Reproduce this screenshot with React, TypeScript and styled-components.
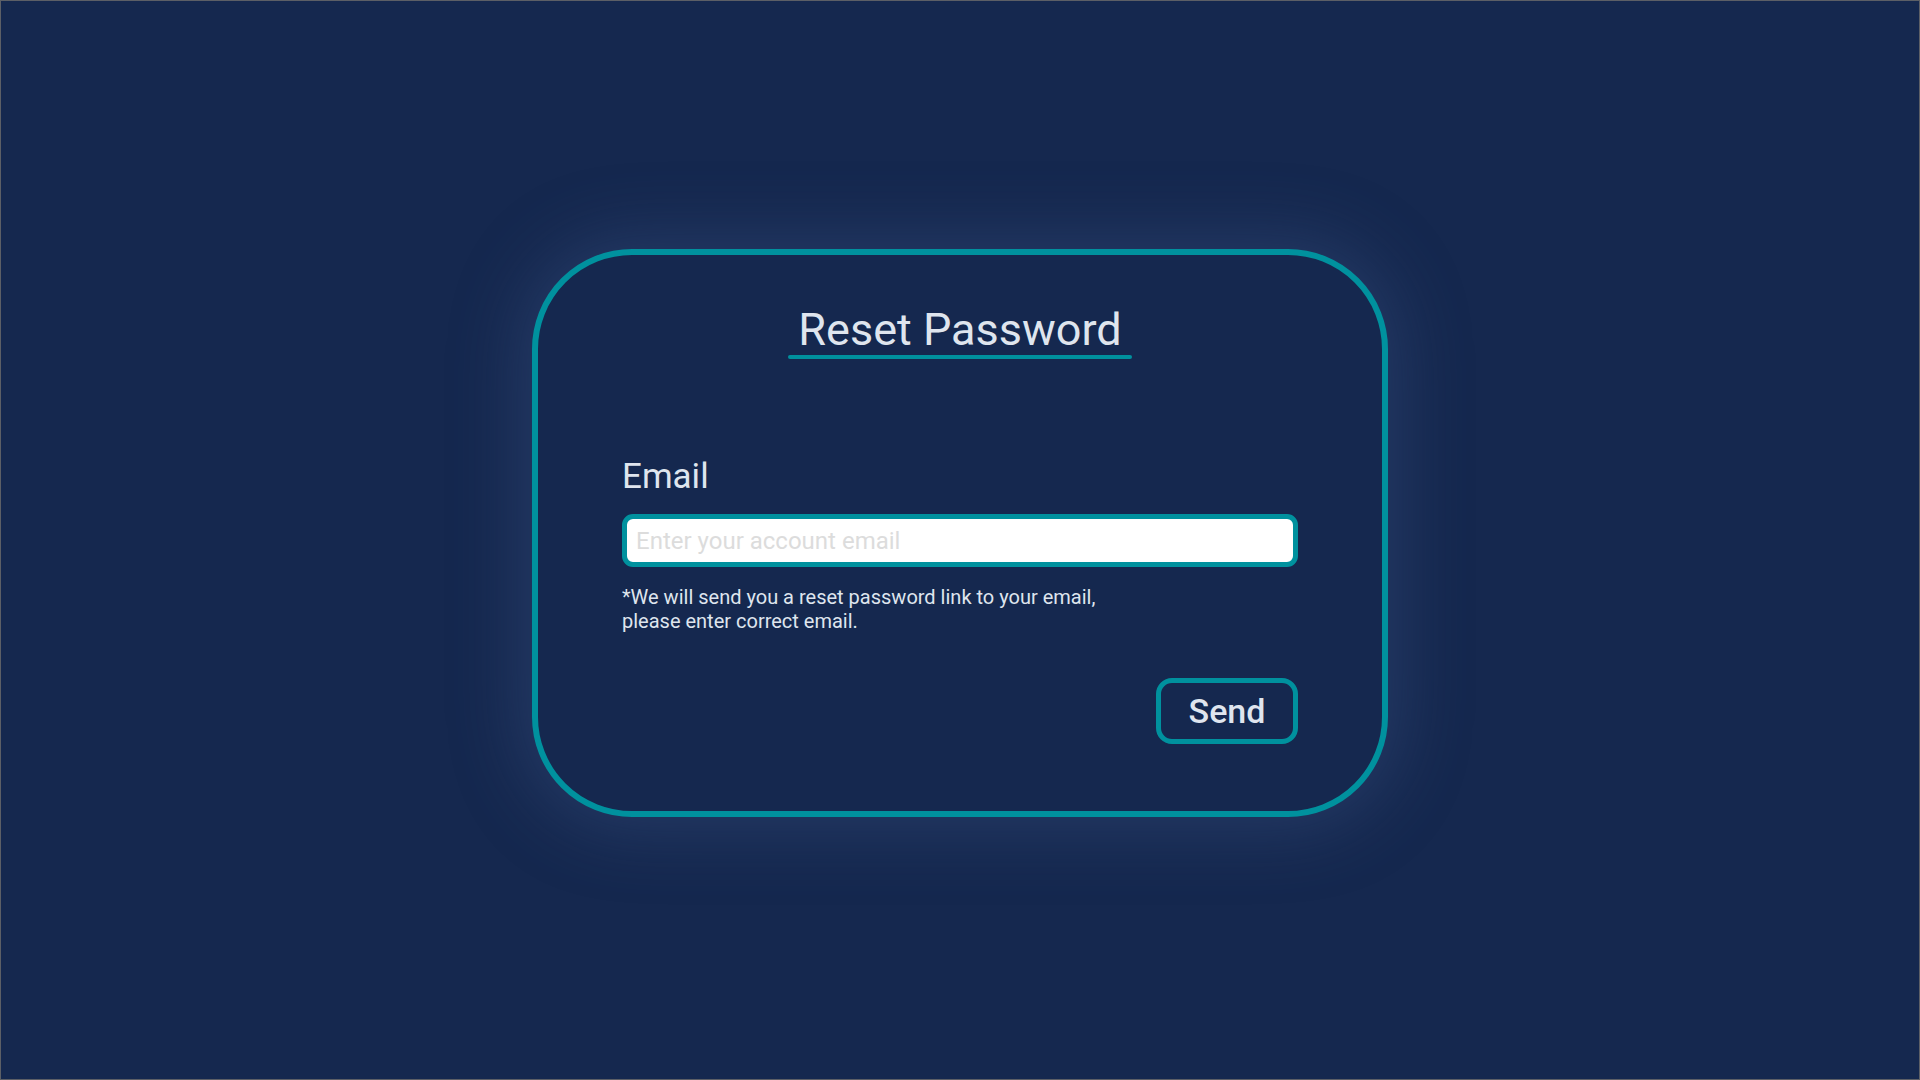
import React from "react";
import styled, { createGlobalStyle } from "styled-components";

const Global = createGlobalStyle`
  * { box-sizing: border-box; }
  html, body { margin: 0; padding: 0; background: #15284f; }
  body { font-family: Roboto, "Liberation Sans", sans-serif; }
`;

const Page = styled.div`
  width: 100vw;
  height: 100vh;
  border: 1px solid #5c5f66;
  background: #15284f;
  display: flex;
  align-items: center;
  justify-content: center;
  padding-bottom: 14px;
`;

const Card = styled.form`
  width: 856px;
  height: 568px;
  border: 6px solid #00919e;
  border-radius: 100px;
  background: #15284f;
  box-shadow: 0 0 70px 10px rgba(70, 95, 145, 0.35);
  padding: 48px 84px 0;
  display: flex;
  flex-direction: column;
`;

const Title = styled.h1`
  align-self: center;
  margin: 0;
  padding: 0 10px;
  font-size: 45px;
  font-weight: 400;
  line-height: 53px;
  color: #dfe5ee;
  position: relative;
  &::after {
    content: "";
    position: absolute;
    left: 0;
    right: 0;
    bottom: -3px;
    height: 4px;
    border-radius: 2px;
    background: #00919e;
  }
`;

const Label = styled.label`
  margin-top: 100px;
  font-size: 35px;
  line-height: 41px;
  color: #dfe5ee;
`;

const Input = styled.input`
  margin-top: 17px;
  width: 100%;
  height: 53px;
  border: 5px solid #00919e;
  border-radius: 11px;
  background: #ffffff;
  padding: 0 9px;
  font-family: Roboto, "Liberation Sans", sans-serif;
  font-size: 24px;
  color: #333;
  outline: none;
  &::placeholder {
    color: #dcdcdc;
  }
`;

const Note = styled.p`
  margin: 18px 0 0;
  font-size: 20px;
  line-height: 24px;
  color: #dfe5ee;
`;

const Actions = styled.div`
  display: flex;
  justify-content: flex-end;
  margin-top: 45px;
`;

const SendButton = styled.button`
  width: 142px;
  height: 66px;
  border: 5px solid #00919e;
  border-radius: 16px;
  background: transparent;
  color: #dfe5ee;
  font-family: Roboto, "Liberation Sans", sans-serif;
  font-size: 34px;
  font-weight: 500;
  cursor: pointer;
  padding: 0;
`;

export default function App() {
  return (
    <>
      <Global />
      <Page>
        <Card onSubmit={(e) => e.preventDefault()}>
          <Title>Reset Password</Title>
          <Label htmlFor="email">Email</Label>
          <Input id="email" type="email" placeholder="Enter your account email" />
          <Note>
            *We will send you a reset password link to your email,
            <br />
            please enter correct email.
          </Note>
          <Actions>
            <SendButton type="submit">Send</SendButton>
          </Actions>
        </Card>
      </Page>
    </>
  );
}
